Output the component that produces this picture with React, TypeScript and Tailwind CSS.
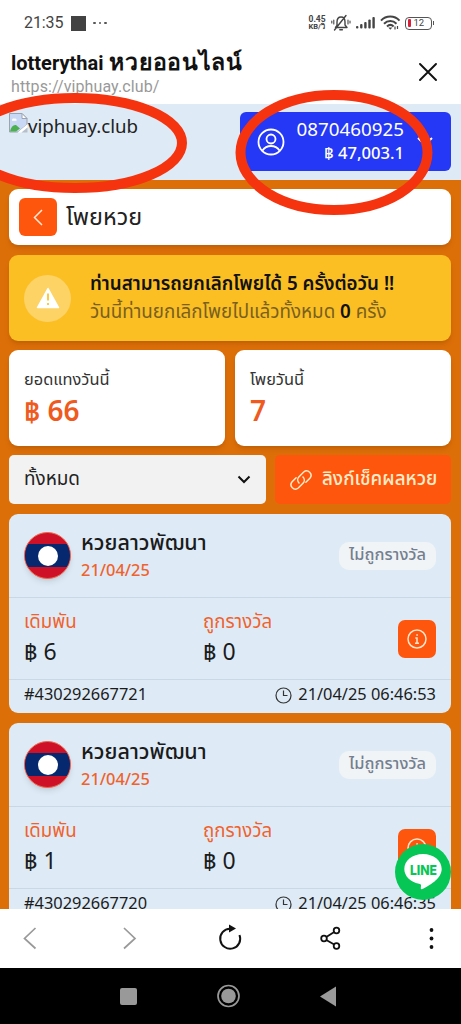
import { ReactNode } from "react";

const SLIPS = [
  { name: "หวยลาวพัฒนา", date: "21/04/25", status: "ไม่ถูกรางวัล", stake: "฿ 6", prize: "฿ 0", id: "#430292667721", time: "21/04/25 06:46:53" },
  { name: "หวยลาวพัฒนา", date: "21/04/25", status: "ไม่ถูกรางวัล", stake: "฿ 1", prize: "฿ 0", id: "#430292667720", time: "21/04/25 06:46:35" },
];

function StatusBar() {
  return (
    <div className="flex h-[46px] items-center pl-6 pr-[27px] font-[Roboto] text-[#444]">
      <span className="text-[16px] leading-none tracking-[-0.1px]">21:35</span>
      <span className="ml-2 size-[15px] bg-[#424242]" />
      <span className="ml-[7px] flex gap-[3px]">
        <i className="size-[2.5px] rounded-full bg-[#555]" />
        <i className="size-[2.5px] rounded-full bg-[#555]" />
        <i className="size-[2.5px] rounded-full bg-[#555]" />
      </span>
      <div className="ml-auto flex items-center">
        <div className="mr-[3px] w-[19px] text-[8.5px] font-bold leading-[8px]">
          <div>0.45</div>
          <div className="whitespace-nowrap text-[7.5px]">KB/วิ</div>
        </div>
        <svg width="20" height="18" viewBox="0 0 20 18" fill="none" stroke="#444" strokeWidth="1.4" strokeLinecap="round">
          <path d="M4.5 13.5h11.5M6 11.5V8c0-3 1.6-5 4-5s4 2 4 5v3l2 2.5M4.5 13.5L6 11.5M8.8 15.8h2.6M3.5 16L15 1.5" />
          <path d="M2.8 6v4M.8 7v2M17 6v4M19 7v2" strokeWidth="1.1" />
        </svg>
        <svg className="ml-[5px]" width="20" height="14" viewBox="0 0 20 14" fill="#444">
          <rect x="0" y="10" width="2.4" height="2.5" rx="1" />
          <rect x="4.1" y="8" width="2.4" height="4.5" rx="1" />
          <rect x="8.2" y="6" width="2.4" height="6.5" rx="1" />
          <rect x="12.3" y="3.5" width="2.4" height="9" rx="1" />
          <rect x="16.4" y="1" width="2.4" height="11.5" rx="1" />
        </svg>
        <svg className="ml-[4px]" width="21" height="16" viewBox="0 0 21 16" fill="none" stroke="#444" strokeWidth="2">
          <path d="M1 5.6C6 .2 14.5 .2 19.5 5.6M4 8.7c3.6-3.6 9-3.6 12.5 0M7 11.5c2-1.9 4.7-1.9 6.6 0" />
          <path d="M8.3 12.5l2 2.3 2-2.3z" fill="#444" stroke="none" />
          <path d="M15 11.5v3M17.5 11v3" strokeWidth="1.2" />
        </svg>
        <div className="ml-[4px] flex h-[13px] w-[27px] items-center rounded-[4px] border-[1.5px] border-[#555] pl-[2px]">
          <span className="h-[8px] w-[3px] rounded-[1px] bg-[#d92038]" />
          <span className="ml-[3px] text-[9.5px] leading-none">12</span>
        </div>
        <span className="ml-px h-[4px] w-[1.5px] bg-[#555]" />
      </div>
    </div>
  );
}

function TitleBar() {
  return (
    <div className="flex h-[58px] pl-[11px] pr-[24px]">
      <div className="font-[Roboto] whitespace-nowrap">
        <div className="h-[30px] text-[20px] font-bold leading-[35px] text-[#111]">
          lotterythai <span className="ml-[1px] text-[23px] leading-none tracking-[0.7px]">หวยออนไลน์</span>
        </div>
        <div className="text-[16px] leading-[22px] tracking-[0.1px] text-[#999]">https://viphuay.club/</div>
      </div>
      <svg className="ml-auto mt-[17px]" width="18" height="18" viewBox="0 0 18 18" stroke="#111" strokeWidth="1.9" strokeLinecap="round">
        <path d="M1 1l16 16M17 1L1 17" />
      </svg>
    </div>
  );
}

function BrokenImage() {
  return (
    <svg width="19" height="20" viewBox="0 0 19 20">
      <path d="M.5.5h12.500l5 5v6l-9 7.500H.5z" fill="#c9d9f5" stroke="#9ca3af" />
      <path d="M13 .5v5h5z" fill="#fff" stroke="#9ca3af" />
      <path d="M3 7c0-1.500 1.500-2 2.200-1.300C7 5 8 6.500 7.500 7.800H3z" fill="#fff" />
      <path d="M1 18.500c1-4.500 3-7 6-6.500l4 3.500-4 3z" fill="#4caf50" />
      <path d="M8.500 19.500L18.500 11v3.500L12.500 19.500z" fill="#fff" />
      <path d="M12.500 19.500l6-5v5z" fill="#b6bfca" />
    </svg>
  );
}

function AppHeader() {
  return (
    <div className="flex h-[76px] justify-between bg-[#deebf6] pl-[9px] pr-[10px] pt-2">
      <div className="flex pt-[1px] text-[18.7px] text-[#222]">
        <BrokenImage />
        <span className="leading-[26px]">viphuay.club</span>
      </div>
      <div className="flex h-[59px] w-[211px] items-center rounded-md bg-[#2438f5] pl-[17px] text-white">
        <svg width="28" height="28" viewBox="0 0 28 28" fill="none" stroke="currentColor" strokeWidth="1.8">
          <circle cx="14" cy="14" r="12.5" />
          <circle cx="14" cy="11" r="4.5" />
          <path d="M5.500 22.500c2-3 5-4.500 8.500-4.500s6.500 1.500 8.500 4.500" />
        </svg>
        <div className="ml-[11px] w-[108px] text-right">
          <div className="text-[18.8px] leading-[23px]">0870460925</div>
          <div className="text-[16.6px] font-medium leading-[24px]">฿ 47,003.1</div>
        </div>
        <svg className="ml-[13px]" width="16" height="10" viewBox="0 0 16 10" fill="none" stroke="currentColor" strokeWidth="1.8">
          <path d="M1 1l7 7 7-7" />
        </svg>
      </div>
    </div>
  );
}

function Alert() {
  return (
    <div className="mt-[10px] flex h-[86px] items-center rounded-[9px] bg-[#fbbf24] pl-[15px] shadow-md">
      <div className="flex size-[47px] items-center justify-center rounded-full bg-[#fdd365]">
        <svg width="24" height="22" viewBox="0 0 24 22">
          <path d="M12 1.500L22.500 20.500H1.500z" fill="#fff" stroke="#fff" strokeWidth="1.5" strokeLinejoin="round" />
          <path d="M12 6.500v7M12 16v2" stroke="#fbc943" strokeWidth="2" />
        </svg>
      </div>
      <div className="ml-[19px] whitespace-nowrap pb-[3px]">
        <div className="text-[18.8px] font-semibold leading-[28px] text-[#111]">ท่านสามารถยกเลิกโพยได้ 5 ครั้งต่อวัน !!</div>
        <div className="text-[18.8px] leading-[28px] text-[#79601f]">
          วันนี้ท่านยกเลิกโพยไปแล้วทั้งหมด <b className="font-semibold text-[#111]">0</b> ครั้ง
        </div>
      </div>
    </div>
  );
}

function StatCard({ label, children }: { label: string; children: ReactNode }) {
  return (
    <div className="h-[96px] rounded-[9px] bg-white px-[15px] pt-[17px] shadow-md">
      <div className="text-[16.4px] leading-[24px] text-[#333]">{label}</div>
      <div className="text-[28px] font-semibold leading-[39px] text-[#ef5a20]">{children}</div>
    </div>
  );
}

function LaoFlag() {
  return (
    <div className="flex size-[47px] flex-col overflow-hidden rounded-full border border-[#f0654b] bg-[#ce1126] shadow-md">
      <div className="mt-[11px] flex h-[23px] items-center justify-center bg-[#06286f]">
        <span className="size-[20px] rounded-full bg-white" />
      </div>
    </div>
  );
}

function SlipCard({ slip }: { slip: (typeof SLIPS)[number] }) {
  return (
    <div className="mb-[10px] h-[199px] shrink-0 rounded-[9px] bg-[#deebf6] text-[#1b1b1b]">
      <div className="flex h-[84px] items-center border-b border-[#c9d8e4] px-[15px]">
        <LaoFlag />
        <div className="ml-[10px] pb-px">
          <div className="text-[21.5px] font-medium leading-[28px]">{slip.name}</div>
          <div className="text-[16.4px] font-medium leading-[27px] text-[#f0622d]">{slip.date}</div>
        </div>
        <div className="ml-auto h-[28px] whitespace-nowrap rounded-[10px] bg-[#f1f4f7] px-[10px] text-[16.4px] font-medium leading-[24px] text-[#747f8f]">
          {slip.status}
        </div>
      </div>
      <div className="flex h-[82px] items-center border-b border-[#c9d8e4] px-[15px]">
        <div className="w-[179px] pb-1">
          <div className="text-[18.7px] leading-[28px] text-[#f0622d]">เดิมพัน</div>
          <div className="text-[23px] leading-[32px]">{slip.stake}</div>
        </div>
        <div className="pb-1">
          <div className="text-[18.7px] leading-[28px] text-[#f0622d]">ถูกรางวัล</div>
          <div className="text-[23px] leading-[32px]">{slip.prize}</div>
        </div>
        <div className="ml-auto flex size-[38px] items-center justify-center rounded-[7px] bg-[#ff560d] text-[#ffe5cc]">
          <svg width="20" height="20" viewBox="0 0 20 20" fill="none" stroke="currentColor" strokeWidth="1.5">
            <circle cx="10" cy="10" r="9" />
            <path d="M8.300 9H10v5M8 14.200h4M9.300 6h1.600" />
          </svg>
        </div>
      </div>
      <div className="flex h-[28px] items-center px-[15px] text-[16.4px] leading-[28px]">
        <span>{slip.id}</span>
        <svg className="ml-auto mr-[6px] mt-[3px]" width="17" height="17" viewBox="0 0 17 17" fill="none" stroke="#333" strokeWidth="1.2">
          <circle cx="8.5" cy="8.5" r="7.5" />
          <path d="M8.500 3.500v5h4" />
        </svg>
        <span>{slip.time}</span>
      </div>
    </div>
  );
}

function LineButton() {
  return (
    <div className="absolute left-[395px] top-[844px] flex size-[56px] items-center justify-center rounded-full bg-[#06c755]">
      <svg width="40" height="40" viewBox="0 0 40 40">
        <path d="M20 2C9.500 2 1.300 8.600 1.300 17c0 7.200 6.200 13.200 14.700 14.700 2.500.5 2.200 1.400 1.800 4.100-.2 1.200.4 1.800 1.600 1.200C25.500 34 38.700 27 38.700 17 38.700 8.600 30.500 2 20 2z" fill="#fff" />
        <text x="20.500" y="22.500" textAnchor="middle" fontFamily="Inter" fontWeight="800" fontSize="13.5" fill="#06c755" textLength="27" lengthAdjust="spacingAndGlyphs">LINE</text>
      </svg>
    </div>
  );
}

function BrowserToolbar() {
  return (
    <div className="h-[59px] shrink-0 bg-white">
      <svg width="461" height="59" viewBox="0 0 461 59" fill="none" stroke="#111" strokeWidth="1.8">
        <path d="M35.500 19L24.500 29.500l11 10M124 19l11 10.500-11 10" stroke="#999" strokeWidth="1.7" />
        <path d="M230 19.700a10 10 0 1 0 9.500 6.300" strokeWidth="2" />
        <path d="M229 15.500l7 4-7 4z" fill="#111" stroke="none" />
        <circle cx="324" cy="29.5" r="2.8" />
        <circle cx="336.5" cy="21.5" r="2.8" />
        <circle cx="336.5" cy="37" r="2.8" />
        <path d="M326.300 28l7.900-5M326.300 31l7.900 4.500" />
        <g fill="#111" stroke="none">
          <circle cx="431.5" cy="21" r="1.9" />
          <circle cx="431.5" cy="29.5" r="1.9" />
          <circle cx="431.5" cy="38" r="1.9" />
        </g>
      </svg>
    </div>
  );
}

function SystemNav() {
  return (
    <div className="h-[56px] shrink-0 bg-black">
      <svg width="461" height="56" viewBox="0 0 461 56" fill="#999">
        <rect x="120" y="20" width="17" height="17" rx="2" />
        <circle cx="228.5" cy="28" r="10.5" fill="none" stroke="#999" strokeWidth="1.7" />
        <circle cx="228.5" cy="28" r="7.3" />
        <path d="M320 28.500L336 18.500v20z" />
      </svg>
    </div>
  );
}

export default function App() {
  return (
    <div className="relative flex h-[1024px] w-[461px] flex-col overflow-hidden bg-white font-['Noto_Sans','Noto_Sans_Thai',sans-serif]">
      <StatusBar />
      <TitleBar />
      <AppHeader />

      <main className="flex min-h-0 flex-1 flex-col overflow-hidden bg-[#dd6f08] pl-[9px] pr-[10px] pt-[9px]">
        <div className="flex h-[56px] shrink-0 items-center rounded-[9px] bg-white pl-[10px] shadow-md">
          <div className="flex size-[38px] items-center justify-center rounded-[6px] bg-[#ff560d]">
            <svg width="10" height="17" viewBox="0 0 10 17" fill="none" stroke="#ffe9d6" strokeWidth="1.5">
              <path d="M9 1L1.500 8.500 9 16" />
            </svg>
          </div>
          <span className="ml-[9px] pb-[2px] text-[23.4px] leading-[34px] text-[#222]">โพยหวย</span>
        </div>

        <div className="shrink-0">
          <Alert />
        </div>

        <div className="mt-[9px] grid shrink-0 grid-cols-2 gap-[10px]">
          <StatCard label="ยอดแทงวันนี้">฿ 66</StatCard>
          <StatCard label="โพยวันนี้">7</StatCard>
        </div>

        <div className="mt-[9px] flex h-[49px] shrink-0 gap-[9px]">
          <div className="flex w-[257px] items-center justify-between rounded-[5px] bg-[#f2f2f2] pl-[15px] pr-[15px]">
            <span className="pb-[3px] text-[18.9px] leading-[28px] text-[#222]">ทั้งหมด</span>
            <svg width="14" height="9" viewBox="0 0 14 9" fill="none" stroke="#111" strokeWidth="2">
              <path d="M1.500 1.500L7 7l5.500-5.500" />
            </svg>
          </div>
          <div className="flex flex-1 items-center rounded-[5px] bg-[#ff560d] pl-[15px] text-[#ffecc9]">
            <svg width="22" height="22" viewBox="0 0 22 22" fill="none" stroke="currentColor" strokeWidth="1.5" strokeLinecap="round">
              <path d="M9 14a4.500 4.500 0 0 1 0-6.300l4.700-4.700a4.400 4.400 0 0 1 6.200 6.200l-4 4" />
              <path d="M13 8a4.500 4.500 0 0 1 0 6.300L8.300 19a4.400 4.400 0 0 1-6.200-6.200l4-4" />
            </svg>
            <span className="ml-[10px] whitespace-nowrap pb-[3px] text-[18.8px] font-medium leading-[28px]">ลิงก์เช็คผลหวย</span>
          </div>
        </div>

        <div className="mt-[10px] flex min-h-0 flex-1 flex-col">
          {SLIPS.map((slip) => (
            <SlipCard key={slip.id} slip={slip} />
          ))}
        </div>
      </main>

      <BrowserToolbar />
      <SystemNav />
      <LineButton />

      {/* Red marker rings around the logo and the account balance */}
      <svg className="pointer-events-none absolute left-0 top-0" width="461" height="230" fill="none" stroke="#f5330f" strokeWidth="10">
        <ellipse cx="75" cy="143" rx="107" ry="45" />
        <ellipse cx="334" cy="152.5" rx="93.5" ry="57.5" />
      </svg>
    </div>
  );
}
